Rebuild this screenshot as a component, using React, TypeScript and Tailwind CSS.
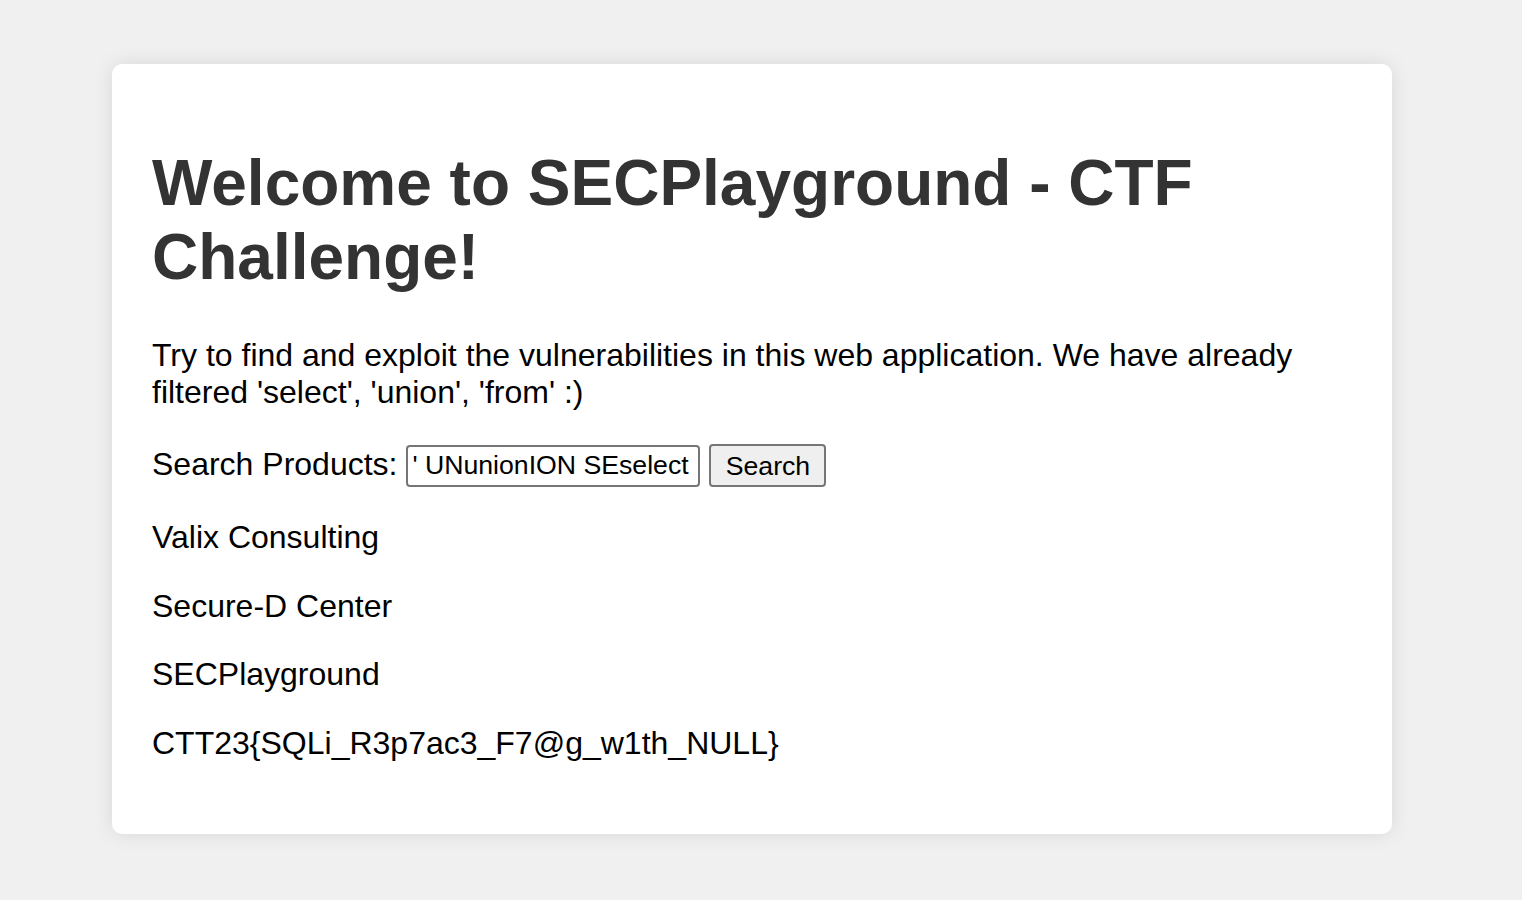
import React from 'react';

const results = [
  'Valix Consulting',
  'Secure-D Center',
  'SECPlayground',
  'CTT23{SQLi_R3p7ac3_F7@g_w1th_NULL}',
];

export default function App() {
  return (
    <div className="min-h-screen bg-[#f0f0f0] pt-[64px] pl-[112px] font-['Liberation_Sans',Arial,sans-serif] text-black">
      <div className="w-[1280px] bg-white rounded-[10px] shadow-[0_0_20px_rgba(0,0,0,0.1)] p-[40px]">
        <h1 className="text-[64px] leading-[1.15] font-bold text-[#333] my-[43px]">
          Welcome to SECPlayground - CTF Challenge!
        </h1>
        <p className="text-[32px] leading-[1.15] mb-[32px]">
          Try to find and exploit the vulnerabilities in this web application. We have already
          filtered 'select', 'union', 'from' :)
        </p>

        {/* Search form */}
        <form className="flex items-center h-[44px]" onSubmit={(e) => e.preventDefault()}>
          <label className="text-[32px] leading-[1.15]">Search Products:</label>
          <input
            readOnly
            value="' UNunionION SEselect 1,2,flag FRfromOM flags-- "
            className="ml-[9px] mt-[2px] w-[294px] h-[42px] border-2 border-[#767676] rounded-[4px] px-[4px] text-[26.67px] text-black bg-white outline-none"
          />
          <button
            type="submit"
            className="ml-[9px] mt-[2px] w-[117px] h-[43px] border-2 border-[#767676] rounded-[4px] bg-[#efefef] text-[26.67px] text-black"
          >
            Search
          </button>
        </form>

        {results.map((r) => (
          <p key={r} className="text-[32px] leading-[1.15] mt-[32px] mb-[32px]">
            {r}
          </p>
        ))}
      </div>
    </div>
  );
}
